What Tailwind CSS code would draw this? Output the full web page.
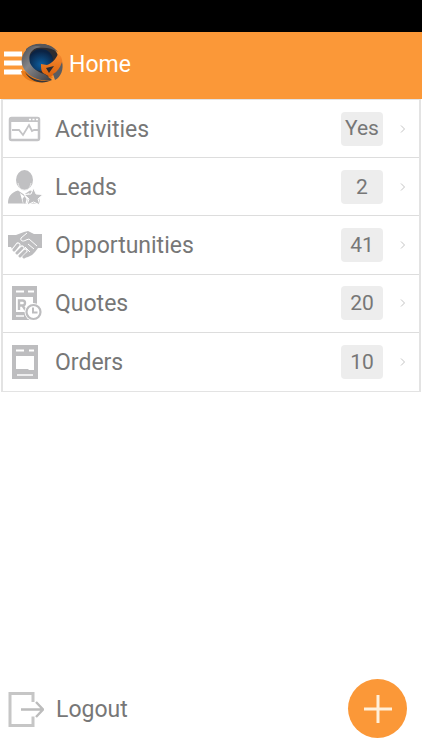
<!DOCTYPE html>
<html lang="en">

<head>
    <meta charset="UTF-8">
    <meta name="viewport" content="width=device-width, initial-scale=1.0">
    <title>Home</title>
    <!-- Tailwind CSS CDN -->
    <script src="https://cdn.jsdelivr.net/npm/@tailwindcss/browser@4"></script>
</head>

<body class="bg-white min-h-screen flex flex-col font-['Roboto',sans-serif] text-[23px] text-[#777777]">

    <!-- Status bar -->
    <div class="h-8 bg-black"></div>

    <header class="h-[67px] bg-[#fb9838] flex items-center pb-1 pl-1">
        <button type="button" aria-label="Menu" class="flex">
            <svg class="w-[60px] h-11" viewBox="0 0 60 44" fill="none">
                <defs>
                    <linearGradient id="ring" x1="0" y1="0" x2="1" y2="1">
                        <stop offset="0" stop-color="#4a4a4e" />
                        <stop offset=".4" stop-color="#85868a" />
                        <stop offset="1" stop-color="#3c3c40" />
                    </linearGradient>
                    <radialGradient id="core" cx=".5" cy=".7" r=".6">
                        <stop offset="0" stop-color="#0c5c9c" />
                        <stop offset="1" stop-color="#0b2344" />
                    </radialGradient>
                    <linearGradient id="flame" x1="0" y1="0" x2="0" y2="1">
                        <stop offset="0" stop-color="#f58a30" />
                        <stop offset="1" stop-color="#d9600c" />
                    </linearGradient>
                </defs>
                <path d="M0 12h18M0 21h18M0 30h18" stroke="#fff" stroke-width="5" />
                <!-- globe -->
                <path d="M17 29c1 6 7 10 14 11 9 1 14-1 18-5l-10-5z" fill="#e87a18" />
                <ellipse cx="37" cy="19" rx="18" ry="17" fill="#2c2c31" />
                <ellipse cx="37" cy="18" rx="12" ry="11" fill="url(#core)" />
                <path d="M22 7C30-1 47 0 54 10c-6-4-13-5-20-4-5 0-9 2-12 5z" fill="#55565b" />
                <path d="M54 12c4 2 5 7 4 12-2 5-6 8-12 11l-7-4c-2-2-2-5-2-9l6 1c5-2 9-6 11-11z" fill="url(#flame)" />
                <path d="M42 26l8-2-5 7z" fill="#2c2c31" />
                <path d="M24 6c-7 6-8 15-4 21 6 9 17 13 28 11-3-2-5-5-8-6-6-2-12-6-14-11-1-5-1-9 2-12 3-3 6-4 9-4-5-2-9-1-13 1z" fill="url(#ring)" />
                <path d="M21 30c6 7 16 11 27 8-10 5-22 2-27-8z" fill="#37373b" />
                <path d="M58 20c2 7-1 15-7 18l-2-6c4-2 7-6 9-12z" fill="#5b5c60" />
            </svg>
        </button>
        <h1 class="pl-[5px] pt-[3px] text-white">Home</h1>
    </header>

    <main class="flex-1">
        <ul class="grid auto-rows-fr min-h-[293px] mx-px border-2 border-t border-b border-[#e3e3e3] divide-y divide-[#dddddd]">
            <li class="flex">
                <a href="#activities" class="flex flex-1 items-center pl-1">
                    <svg class="w-9 h-9 mr-3 text-[#c4c4c6]" viewBox="0 0 36 36" fill="none">
                        <rect x="3" y="7" width="29" height="22" rx="1.500" stroke="currentColor" stroke-width="2.500" />
                        <path d="M3 6h29v5H3z" fill="currentColor" />
                        <path d="M22 8.500h2m1.500 0h2m1.500 0h2" stroke="#fff" stroke-width="1.500" />
                        <path d="M5 19h7l4 5 6-10 3 6 2-1h4" stroke="currentColor" stroke-width="1.800" />
                    </svg>
                    <span class="flex-1 pt-[3px]">Activities</span>
                    <span class="w-[42px] h-[34px] mr-4 pt-px rounded-sm bg-[#ededed] text-[21px] flex items-center justify-center">Yes</span>
                    <svg class="w-2 h-3 mr-3" viewBox="0 0 8 12" fill="none" stroke="#c4c4c4"><path d="M2 2.500L5.500 6 2 9.500" /></svg>
                </a>
            </li>
            <li class="flex">
                <a href="#leads" class="flex flex-1 items-center pl-1">
                    <svg class="w-9 h-9 mr-3 text-[#c0c0c2]" viewBox="0 0 36 36" fill="currentColor">
                        <path d="M1 34.500c0-7 3-11 10-13l6 4 6-4c6 1 10 6 10 13z" />
                        <path d="M13 24l4 3 5-3-2 10.500h-4z" fill="#fff" />
                        <path d="M17.500 27l2 3-1 4.500h-2l-1-4.500z" />
                        <ellipse cx="17.500" cy="11" rx="8.500" ry="10" />
                        <path d="M11 14c1 5 3 7 6.500 7s5.500-2 6.500-7" fill="none" stroke="#e8e8e8" />
                        <path d="M26.500 19l2.500 6 7 .5-5 4.500 2 6-6.500-3-6.500 3 2-6-5-4.500 7-.5z" stroke="#fff" />
                    </svg>
                    <span class="flex-1 pt-[3px]">Leads</span>
                    <span class="w-[42px] h-[34px] mr-4 pt-px rounded-sm bg-[#ededed] text-[21px] flex items-center justify-center">2</span>
                    <svg class="w-2 h-3 mr-3" viewBox="0 0 8 12" fill="none" stroke="#c4c4c4"><path d="M2 2.500L5.500 6 2 9.500" /></svg>
                </a>
            </li>
            <li class="flex">
                <a href="#opportunities" class="flex flex-1 items-center pl-1">
                    <svg class="w-9 h-9 mr-3 text-[#bdbdbf]" viewBox="0 0 36 36" fill="currentColor">
                        <path d="M1 8h8l8-3 4-1 6 3h8v14h-4l-3 4-3 3-4 2-4 1-3-2-5-4-4-3-1-2H1z" />
                        <path d="M20 6l-6 5c-1 3 2 4 5 2l3-1 8 7" fill="none" stroke="#fff" />
                        <path d="M21 17l6 5M18 20l5 5M15 23l5 5" fill="none" stroke="#fff" />
                        <path d="M7 23l4-5M10 26l5-5M13 29l5-5" fill="none" stroke="#fff" stroke-width="5" stroke-linecap="round" />
                        <path d="M7 23l4-5M10 26l5-5M13 29l5-5M17 30l3-3" fill="none" stroke="currentColor" stroke-width="3" stroke-linecap="round" />
                    </svg>
                    <span class="flex-1 pt-[3px]">Opportunities</span>
                    <span class="w-[42px] h-[34px] mr-4 pt-px rounded-sm bg-[#ededed] text-[21px] flex items-center justify-center">41</span>
                    <svg class="w-2 h-3 mr-3" viewBox="0 0 8 12" fill="none" stroke="#c4c4c4"><path d="M2 2.500L5.500 6 2 9.500" /></svg>
                </a>
            </li>
            <li class="flex">
                <a href="#quotes" class="flex flex-1 items-center pl-1">
                    <svg class="w-9 h-9 mr-3 text-[#bdbdbf]" viewBox="0 0 36 36" fill="none">
                        <path d="M5 1h25v34H5z" fill="currentColor" />
                        <path d="M9 6.500h8m4 0h6" stroke="#fff" stroke-width="2" />
                        <path d="M9 12h17v15H9z" fill="#fff" />
                        <path d="M12 25V15.500h3.500a2.500 2.500 0 0 1 0 5H12m3.500 0l3 4.500" stroke="currentColor" stroke-width="2.400" />
                        <path d="M9 31h8" stroke="#fff" stroke-width="1.500" />
                        <circle cx="26.500" cy="27" r="9" fill="#fff" />
                        <circle cx="26.500" cy="27" r="7" stroke="currentColor" stroke-width="2.200" />
                        <path d="M26 22.500V27.500h4.500" stroke="currentColor" stroke-width="2" />
                    </svg>
                    <span class="flex-1 pt-[3px]">Quotes</span>
                    <span class="w-[42px] h-[34px] mr-4 pt-px rounded-sm bg-[#ededed] text-[21px] flex items-center justify-center">20</span>
                    <svg class="w-2 h-3 mr-3" viewBox="0 0 8 12" fill="none" stroke="#c4c4c4"><path d="M2 2.500L5.500 6 2 9.500" /></svg>
                </a>
            </li>
            <li class="flex">
                <a href="#orders" class="flex flex-1 items-center pl-1">
                    <svg class="w-9 h-9 mr-3 text-[#bdbdbf]" viewBox="0 0 36 36" fill="none">
                        <path d="M5 1h26v34H5z" fill="currentColor" />
                        <path d="M9 6.500h8m5 0h5" stroke="#fff" stroke-width="2" />
                        <path d="M9 12h18v14h-5l-1-1H9z" fill="#fff" />
                        <path d="M10 31h16" stroke="#fff" stroke-width="1.500" />
                    </svg>
                    <span class="flex-1 pt-[3px]">Orders</span>
                    <span class="w-[42px] h-[34px] mr-4 pt-px rounded-sm bg-[#ededed] text-[21px] flex items-center justify-center">10</span>
                    <svg class="w-2 h-3 mr-3" viewBox="0 0 8 12" fill="none" stroke="#c4c4c4"><path d="M2 2.500L5.500 6 2 9.500" /></svg>
                </a>
            </li>
        </ul>
    </main>

    <footer class="flex items-center justify-between pl-2 pr-[15px] pb-3">
        <a href="#logout" class="flex items-center gap-3">
            <svg class="w-9 h-9" viewBox="0 0 36 36" fill="none">
                <path d="M25 11V2.500H2v32h23v-9" stroke="#c6c6c6" stroke-width="3" />
                <path d="M13 18.500h21M28 11l7 7.500-7 7.500" stroke="#bcbcbc" stroke-width="2.400" />
            </svg>
            <span class="pt-[3px]">Logout</span>
        </a>
        <button type="button" aria-label="Add" class="w-[59px] h-[59px] rounded-full bg-[#fb9838] flex items-center justify-center">
            <svg class="w-7 h-7" viewBox="0 0 28 28" fill="none" stroke="#fff0da" stroke-width="3"><path d="M14 0v28M0 14h28" /></svg>
        </button>
    </footer>

</body>

</html>
